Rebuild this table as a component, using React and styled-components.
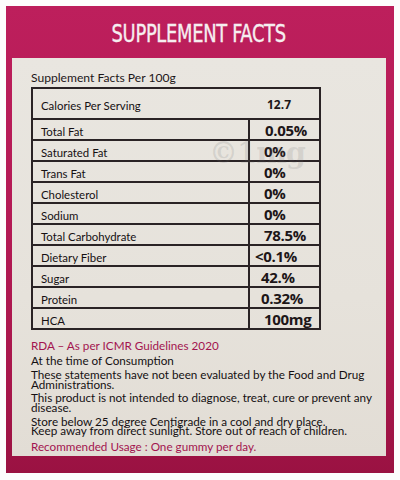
import React from "react";
import styled, { createGlobalStyle } from "styled-components";

const Global = createGlobalStyle`
  html, body { margin: 0; padding: 0; background: #ffffff; }
  #root { width: 400px; height: 480px; }
`;

const Page = styled.div`
  width: 400px;
  height: 480px;
  box-sizing: border-box;
  padding: 6px 6px 7px 6px;
  background: #fdfdfd;
`;

const Panel = styled.div`
  height: 100%;
  box-sizing: border-box;
  display: flex;
  flex-direction: column;
  padding: 0 8px 17px 6px;
  background: linear-gradient(180deg, #bd1f5c 0%, #b41a55 45%, #a8164b 80%, #9a1242 100%);
`;

const Header = styled.div`
  height: 52px;
  display: flex;
  align-items: center;
  justify-content: center;
  padding-top: 2px;
  box-sizing: border-box;
`;

const Title = styled.h1`
  margin: 0;
  font-family: "DejaVu Sans Condensed", "DejaVu Sans", sans-serif;
  font-stretch: condensed;
  font-weight: 400;
  font-size: 25.5px;
  letter-spacing: -0.4px;
  color: #f6eef0;
  -webkit-text-stroke: 0.35px #f6eef0;
  transform: scaleX(0.78);
  white-space: nowrap;
`;

const Card = styled.div`
  flex: 1;
  position: relative;
  background: linear-gradient(180deg, #e9e6e0 0%, #e6e2db 60%, #e2ddd5 100%);
  padding: 12px 0 0 19px;
  font-family: "Lato", "Open Sans", sans-serif;
  color: #1d1618;
`;

const Caption = styled.div`
  font-size: 12.1px;
  line-height: 16px;
  margin-bottom: 1px;
`;

const Table = styled.div`
  width: 290px;
  box-sizing: border-box;
  border: 2px solid #2a2325;
  display: grid;
  grid-template-columns: 215px 1fr;
`;

const Cell = styled.div`
  height: ${(p) => p.$h}px;
  box-sizing: border-box;
  display: flex;
  align-items: center;
  border-top: 2px solid #2a2325;
  border-left: ${(p) => (p.$value ? "2px solid #2a2325" : "none")};
`;

const Label = styled.span`
  padding-left: 8px;
  font-size: 11.4px;
  padding-top: 3px;
  color: #151012;
`;

const Value = styled.span`
  padding-left: ${(p) => p.$indent}px;
  padding-right: ${(p) => p.$right || 0}px;
  font-family: "Open Sans", "Lato", sans-serif;
  font-weight: 700;
  font-size: ${(p) => (p.$small ? 12 : 15)}px;
  letter-spacing: ${(p) => (p.$small ? 0 : -0.3)}px;
  padding-top: 1px;
`;

const FirstRow = styled.div`
  height: 29px;
  display: flex;
  align-items: center;
  justify-content: space-between;
  grid-column: 1 / span 2;
`;

const Watermark = styled.div`
  position: absolute;
  left: 197px;
  top: 78px;
  font-family: "DejaVu Serif", serif;
  font-weight: 700;
  font-size: 29px;
  color: rgba(110, 110, 110, 0.16);
  pointer-events: none;
  letter-spacing: -1px;
`;

const Notes = styled.div`
  margin-top: 10px;
  font-size: 11.7px;
`;

const Para = styled.p`
  margin: 0 0 ${(p) => p.$gap}px 0;
  line-height: ${(p) => p.$lh || 10}px;
  white-space: nowrap;
  color: ${(p) => (p.$accent ? "#a3144f" : "#141012")};
`;

const rows = [
  ["Total Fat", "0.05%", 15],
  ["Saturated Fat", "0%", 14],
  ["Trans Fat", "0%", 14],
  ["Cholesterol", "0%", 14],
  ["Sodium", "0%", 14],
  ["Total Carbohydrate", "78.5%", 14],
  ["Dietary Fiber", "<0.1%", 5],
  ["Sugar", "42.%", 11],
  ["Protein", "0.32%", 11],
  ["HCA", "100mg", 14],
];

export default function App() {
  return (
    <>
      <Global />
      <Page>
        <Panel>
          <Header>
            <Title>SUPPLEMENT FACTS</Title>
          </Header>
          <Card>
            <Caption>Supplement Facts Per 100g</Caption>
            <Table>
              <FirstRow>
                <Label>Calories Per Serving</Label>
                <Value $small $indent={0} $right={28}>12.7</Value>
              </FirstRow>
              {rows.map(([l, v, ind]) => (
                <React.Fragment key={l}>
                  <Cell $h={21}>
                    <Label>{l}</Label>
                  </Cell>
                  <Cell $h={21} $value>
                    <Value $indent={ind}>{v}</Value>
                  </Cell>
                </React.Fragment>
              ))}
            </Table>
            <Watermark>©1mg</Watermark>
            <Notes>
              <Para $accent $gap={5}>RDA – As per ICMR Guidelines 2020</Para>
              <Para $gap={4}>At the time of Consumption</Para>
              <Para $gap={4} $lh={10}>
                These statements have not been evaluated by the Food and Drug
                <br />
                Administrations.
              </Para>
              <Para $gap={4.5} $lh={9.5}>
                This product is not intended to diagnose, treat, cure or prevent any
                <br />
                disease.
              </Para>
              <Para $gap={5.5} $lh={9.5}>
                Store below 25 degree Centigrade in a cool and dry place.
                <br />
                Keep away from direct sunlight. Store out of reach of children.
              </Para>
              <Para $accent $gap={0}>Recommended Usage : One gummy per day.</Para>
            </Notes>
          </Card>
        </Panel>
      </Page>
    </>
  );
}
